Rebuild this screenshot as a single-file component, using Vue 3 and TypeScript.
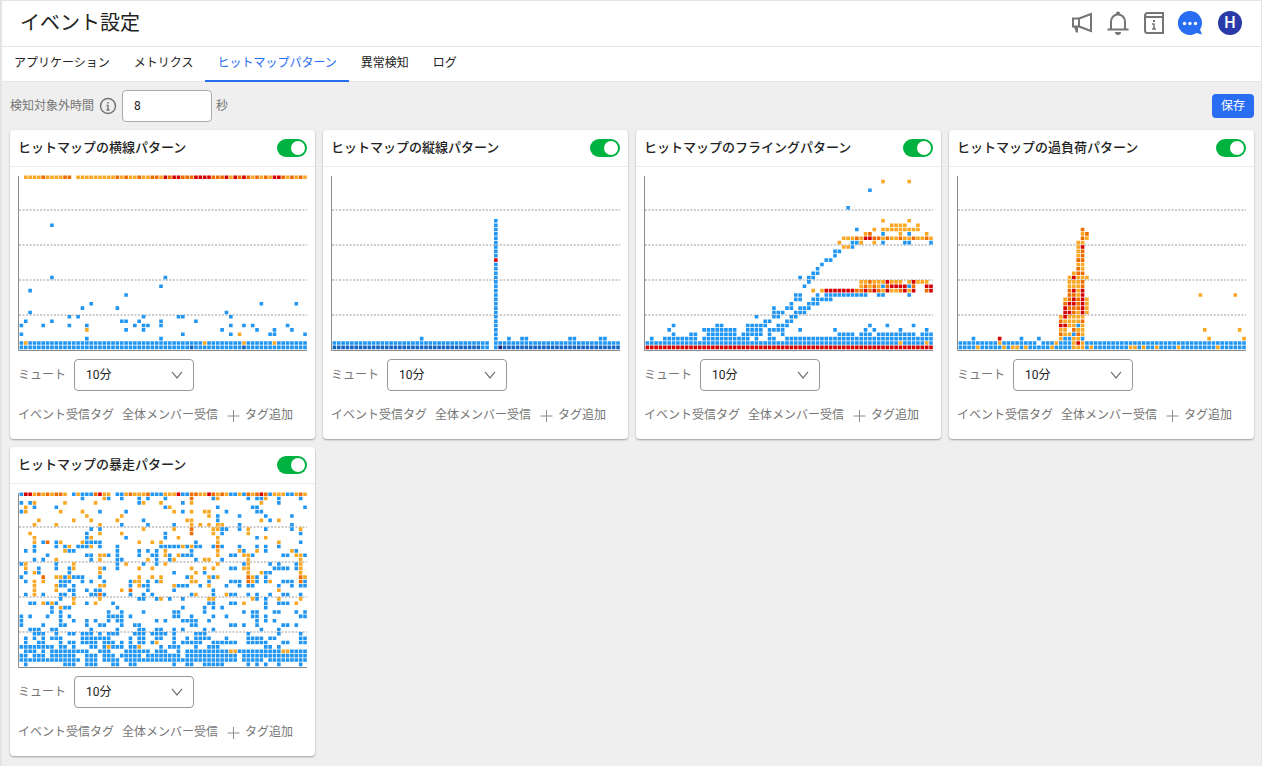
<script setup lang="ts">
import { ref, reactive } from 'vue'

type Tone = 'b' | 'o' | 'd' | 'r' | 'n' | 'i'
interface Layer { tone: Tone; path: string }
interface Pattern { id: string; title: string; enabled: boolean; mute: string; layers: Layer[] }

const COLS = 66
const ROWS = 40
const PITCH = 288 / COLS
const SIZE = 3.6
const ORIGIN = 1.2

// Each line: row counted from the bottom, then tone letters followed by columns or ranges.
function toLayers(source: string): Layer[] {
  const paths: Partial<Record<Tone, string>> = {}
  for (const line of source.trim().split('\n')) {
    const [row, ...tokens] = line.trim().split(/\s+/)
    let tone: Tone = 'b'
    for (const token of tokens) {
      if (/^[a-z]$/.test(token)) {
        tone = token as Tone
        continue
      }
      const [from, to = from] = token.split('-').map(Number)
      for (let col = from; col <= to; col++) {
        const x = ORIGIN + col * PITCH + (PITCH - SIZE) / 2
        const y = (ROWS - 1 - Number(row)) * PITCH + (PITCH - SIZE) / 2
        paths[tone] = (paths[tone] ?? '') + `M${x.toFixed(2)} ${y.toFixed(2)}h${SIZE}v${SIZE}h-${SIZE}z`
      }
    }
  }
  return (Object.keys(paths) as Tone[]).map((tone) => ({ tone, path: paths[tone] as string }))
}

const horizontal = `
39 o 1-4 6-9 13-21 23 25-26 28-29 32 48 53 55 57 61 63 65 d 5 10-11 22 24 27 30-31 34 37-39 44-46 50 52 54 56 60 62 64 r 33 35-36 40-43 47 49 51 58-59
28 b 7
16 b 7 33
14 b 32
13 b 2
12 b 24
10 b 16 55 63
9 b 14 22
8 b 2 47
7 b 11 13 28 36-37 48
6 b 1 7 23-24 27 32 40
5 b 0 5 11 15 26 28-29 32 48 51 53 61
4 o 15 b 24 28 46 54 58 62
3 b 0 37 48 57-58 65 o 50
2 b 15 32
1 b 0 2-41 43-50 52-57 59-65 o 1 42 51 58
0 b 0-38 40-50 52-65 n 39 51`

const vertical = `
${Array.from({ length: 27 }, (_, i) => `${i + 3} ${i + 3 === 20 ? 'r' : 'b'} 37`).join('\n')}
2 b 20 37 40 43-44 54-55 61-62
1 b 0-35 37-65
0 n 0-33 39-65 b 34-35 37 i 38`

const flying = `
38 o 54 60
36 b 51
32 b 46
29 o 54 60
28 o 56-59 62
27 b 48 o 52 54-62
26 o 50 58 64 d 51 b 54 60
25 o 45-47 49 54 56-57 59-60 62-63 65 d 48 52-53 55 58 61 64 r 50-51
24 o 44 49 52 b 47-48 54 59-60 65
23 o 45-46 b 47
22 b 43-44
21 b 43
20 b 41-42
19 b 40
18 b 39
17 b 38-39
16 b 35 37-38
15 b 37 o 49-50 52-54 56-58 60 62-64 d 51 r 55 61
14 b 36 54 60 o 49 51 53 d 50 52 55 61 r 56-59 64-65
13 o 38 40 54 56-57 60 d 48-49 51 53 58 64 r 41-47 50 52 55 59 61 65
12 b 34-35 39 41-50 53-54 60
11 b 34-35 38-42
10 b 33 37-39
9 b 29 32-33 35-37
8 b 29-31 34-36
7 b 25 29-30 33-34
6 b 27-28 32-33
5 b 6 16-17 23-27 30-32 51 55 61
4 b 5 13-20 23-26 28-31 35 43 50 52 58 64
3 b 6 10-11 14-20 22-26 28 31 44-47 49-51 53-61 63-65
2 b 1 4-11 13-23 25 28-29 32-65
1 b 0-57 59-63 65 o 58 64
0 r 0-65`

const overload = `
27 d 28
26 o 28 d 29
25 d 28 o 29
24 o 27-28
23 o 27 r 28
22 o 27 d 28
21 o 27 d 28
20 d 27-28
19 o 27-28
18 d 27 o 28
17 o 26 d 27-28
16 o 25 27-29 r 26
15 o 25-27 d 28
14 o 25-27 d 28
13 d 25 r 26 28 o 27
12 d 25-26 o 27 55 63 r 28
11 o 24 29 d 25 27 r 26 28
10 d 24 27 r 25-26 28 o 29
9 r 24 28 d 25-27 o 29
8 r 24-25 28 d 26 o 27 29
7 o 23 25-28 r 24
6 d 23 28 o 24-27
5 r 23-24 o 25-26 28 b 27
4 o 23-24 27-28 56 64 d 26
3 d 23 27 o 24-25 28 b 26
2 b 3 14 18 24-25 28 r 9 o 23 26-27 57 65
1 b 0-8 10-17 19-21 23-25 29-65 o 9 22 26 28 r 27
0 b 0-3 5-9 11 14 16-20 22-25 29 31-38 41 43-44 46-49 51-58 60-65 o 4 10 12-13 15 21 26-28 30 39-40 42 45 50 59`

const runaway = `
39 b 0 12 14-16 22-23 30-32 37-38 48-49 51 57 61-62 r 1-2 18 36 43 55 o 3 5 7 10 13 19-20 24 26-28 33-35 41-42 45 47 50 53 58-60 63 65 d 4 6 8-9 17 25 29 39-40 44 46 52 54 56 64
38 b 14 20 23 27 29 33 44 52 54-55 59 64 o 19 45 56 d 39
37 b 0 2 27 37 59 o 3 10 17 28 32 39 55
36 o 1 34 b 3 8 33 45 53-54 65
35 b 0 18 24 37 47 54-55 o 1 9 14 35 39 42-43
34 o 15 23 43 b 45 50 56 62
33 o 4 12 16 22 38-39 55 59 b 28 45 57
32 o 3 8 18 39 41 43 45-46 b 23 29 35 50 62
31 b 16 18 46-47 50 56 62 o 28 35 44-45 52 64 d 39
30 o 2 18 23 44 52 b 15 33 46 64 d 39
29 o 3 16 36 45 56 b 15 24 33 54
28 o 3 9 14 27 30 32 45 59 b 5 8 15-18 40 64 d 6
27 b 3 8 10 13-15 18 22 32-36 38 40-41 44 46 50 54 56 59 o 11 16 37 39 d 45
26 b 1 3 11-12 22 27 29 31 39 51 56 63 o 10 33 45 50 54 62
25 b 6 15-16 20 22 27 30-31 34 37-39 48-49 53 60-61 65 o 18-19 33 36 45 51-52 63-64
24 b 3 5 16 22-23 31 34 40 46 o 8 18 29 35 42-43 52 64
23 b 0 8 22 28 31 51 57 59 63 o 1 12 24 33 45 52 64
22 o 1 12 18 27 30 39 42 44 51-52 64 b 4 8 11 19 22 48-49 58-61 63
21 b 1 4 11 35 42 56-57 o 3 18 40 52 55 64
20 b 0 10 12-14 18 38 44 54 56 o 8-9 11 27 30 32 39 43 45 53 65 d 5 52 64
19 b 1 9-11 14 16 19 25 29 31 43 48-50 54 56 60-62 65 o 3 5 26-27 32 39-40 53 57 d 52 64
18 o 3 8 18-19 27 35 43 b 9-10 12 25 28-29 36-38 41 47 50 52-53 59 62 64-65
17 o 3 8 23 59 b 11-12 15 17-18 29 35 44 d 25
16 b 1 5 9-10 12 16-17 19 25 28 30 39 44 48-49 52 54 57 60-61 64 o 3 40 47 d 18
15 b 9 27-28 31 34 37 54 56 o 12 18 32 43-44 53 59 64
14 b 2-3 6 8 15 21 43-44 48-49 56 59-61 o 5 7 12 17 51 63
13 b 7 10-11 22 37 42 44 46 56 o 9
12 b 7 9 20 23 28 35-36 42 51 53-54 58-59 63 65
11 b 0 2 6 9 11 20-23 25 35-36 39 44 47 53-54 56 64-65
10 b 0 9 12 15 17 20 22-23 31 33 37-40 43 54 56 58
9 b 0 5 9-10 15 18-19 23 26-27 39-40 48-49 51 54 60-61 63
8 b 2-4 7-8 16 22 27-28 31-32 35 37 42 44 55 59
7 b 3-5 8 11-12 14-16 18 20-22 26-28 30-33 35 40-42 52 59 64
6 b 1 3 5 7-9 14-20 25 27-28 31-32 35 38 40-43 47 52-55 57-58 64-65
5 b 1 4-5 9 11-12 14-17 19-21 23 25 27-28 30 35 37-41 44-49 52-56 60-61 64-65 o 31
4 b 0-7 9-10 12 16-17 19 21-23 25-26 32 34-36 40 43-45 56-57 59 o 20 27
3 b 1-3 5 7-15 18-20 24-29 31-33 36 38-47 50-59 62-65 o 48-49 60-61
2 b 0-1 3-5 7-12 15-17 19-21 23-27 29-36 38-49 51-65
1 b 0-13 15-17 19-22 24-49 51-55 57-65
0 b 1 10-12 15-17 21-22 25-26 35 38-39 42-46 52 54 56 59 64`

const tabs = ['アプリケーション', 'メトリクス', 'ヒットマップパターン', '異常検知', 'ログ']
const activeTab = ref('ヒットマップパターン')
const excludedSeconds = ref('8')
const muteOptions = ['5分', '10分', '30分']
const gridLines = [35, 70, 105, 140]

const patterns = reactive<Pattern[]>([
  { id: 'horizontal', title: 'ヒットマップの横線パターン', enabled: true, mute: '10分', layers: toLayers(horizontal) },
  { id: 'vertical', title: 'ヒットマップの縦線パターン', enabled: true, mute: '10分', layers: toLayers(vertical) },
  { id: 'flying', title: 'ヒットマップのフライングパターン', enabled: true, mute: '10分', layers: toLayers(flying) },
  { id: 'overload', title: 'ヒットマップの過負荷パターン', enabled: true, mute: '10分', layers: toLayers(overload) },
  { id: 'runaway', title: 'ヒットマップの暴走パターン', enabled: true, mute: '10分', layers: toLayers(runaway) },
])
</script>

<template>
  <div class="page">
    <header class="header">
      <h1>イベント設定</h1>
      <div class="actions">
        <button type="button" class="icon-button" aria-label="お知らせ">
          <svg viewBox="0 0 24 24" fill="none" stroke="#757575" stroke-width="2">
            <path d="M3 7.500h6v8H3zM9 7.500 21 3v17L9 15.500" />
            <path d="M4 16h4v5.500H6z" fill="#757575" stroke="none" />
          </svg>
        </button>
        <button type="button" class="icon-button" aria-label="通知">
          <svg viewBox="0 0 24 24" fill="none" stroke="#757575" stroke-width="2">
            <path d="M1.500 18.500h21M5 18.500V10.500a7 7 0 0 1 14 0v8" />
            <path d="M10 4V2a2 1.500 0 0 1 4 0v2z" fill="#757575" stroke="none" />
            <path d="M9 21h6a3 3 0 0 1-6 0z" fill="#757575" stroke="none" />
          </svg>
        </button>
        <button type="button" class="icon-button" aria-label="ガイド">
          <svg viewBox="0 0 24 24" fill="none" stroke="#757575" stroke-width="2">
            <path d="M22 2H5.500A2.500 2.500 0 0 0 3 4.500V19.500A2.500 2.500 0 0 0 5.500 22H21V6H5.500A2 2 0 0 1 3 4M21 2v4" />
            <path d="M10 13h2v5M10 18h4" stroke-width="1.500" />
            <path d="M11 9h2v2h-2z" fill="#757575" stroke="none" />
          </svg>
        </button>
        <button type="button" class="icon-button" aria-label="チャット">
          <svg viewBox="0 0 24 24">
            <path d="M12 0a12 12 0 1 0 6.500 22l5.500 1.500-2-5A12 12 0 0 0 12 0z" fill="#296df2" />
            <circle cx="6.500" cy="12.500" r="1.700" fill="#fff" />
            <circle cx="12" cy="12.500" r="1.700" fill="#fff" />
            <circle cx="17.500" cy="12.500" r="1.700" fill="#fff" />
          </svg>
        </button>
        <button type="button" class="avatar">H</button>
      </div>
    </header>

    <nav class="tabs">
      <a
        v-for="tab in tabs"
        :key="tab"
        href="#"
        :class="{ active: tab === activeTab }"
        @click.prevent="activeTab = tab"
      >{{ tab }}</a>
    </nav>

    <main class="content">
      <div class="toolbar">
        <label for="excluded">検知対象外時間</label>
        <svg class="info" viewBox="0 0 18 18" fill="none" stroke="#757575">
          <circle cx="9" cy="9" r="7.500" stroke-width="1.500" />
          <path d="M7.500 8.500H9V13M7.500 13h3" stroke-width="1.400" />
          <path d="M8.200 5h1.600v1.600H8.200z" fill="#757575" stroke="none" />
        </svg>
        <input id="excluded" v-model="excludedSeconds" type="text" />
        <span class="unit">秒</span>
        <button type="button" class="save">保存</button>
      </div>

      <div class="cards">
        <section v-for="pattern in patterns" :key="pattern.id" class="card">
          <div class="card-head">
            <h2><label :for="`toggle-${pattern.id}`">{{ pattern.title }}</label></h2>
            <input :id="`toggle-${pattern.id}`" v-model="pattern.enabled" type="checkbox" class="toggle" />
          </div>
          <div class="card-body">
            <svg class="chart" viewBox="0 0 289 176">
              <line
                v-for="y in gridLines"
                :key="y"
                x1="1"
                x2="289"
                :y1="y"
                :y2="y"
                class="grid-line"
              />
              <path v-for="layer in pattern.layers" :key="layer.tone" :d="layer.path" :class="`tone-${layer.tone}`" />
              <path class="axis" d="M.5 1V175.500H289" />
            </svg>
            <div class="mute">
              <label :for="`mute-${pattern.id}`">ミュート</label>
              <span class="select">
                <select :id="`mute-${pattern.id}`" v-model="pattern.mute">
                  <option v-for="option in muteOptions" :key="option">{{ option }}</option>
                </select>
                <svg viewBox="0 0 12 8" fill="none" stroke="#757575" stroke-width="1.200">
                  <path d="M1 .8 6 7l5-6.200" />
                </svg>
              </span>
            </div>
            <div class="tags">
              <span>イベント受信タグ</span>
              <span>全体メンバー受信</span>
              <button type="button" class="add">
                <svg viewBox="0 0 14 14" stroke="#8c8c8c"><path d="M7.500 2v12M1.500 8h12" /></svg>
                タグ追加
              </button>
            </div>
          </div>
        </section>
      </div>
    </main>
  </div>
</template>

<style>
body {
  margin: 0;
  background: #efefef;
}
</style>

<style scoped>
.page {
  box-sizing: border-box;
  min-height: 100vh;
  border: 1px solid #e4e4e4;
  border-left-width: 2px;
  background: #efefef;
  color: #222;
  font-family: Roboto, "Noto Sans CJK JP", sans-serif;
  font-size: 12px;
  line-height: 18px;
}
button,
input,
select {
  font: inherit;
  color: inherit;
}
.header {
  display: flex;
  align-items: center;
  justify-content: space-between;
  box-sizing: border-box;
  height: 46px;
  padding: 0 19px 2px 18px;
  border-bottom: 1px solid #e4e4e4;
  background: #fff;
}
h1 {
  margin: 0;
  font-size: 20px;
  line-height: 28px;
  font-weight: 400;
}
.actions {
  display: flex;
  gap: 12px;
}
.icon-button,
.avatar {
  width: 24px;
  height: 24px;
  padding: 0;
  border: 0;
  background: none;
}
.icon-button svg {
  display: block;
}
.avatar {
  margin-left: 4px;
  border-radius: 50%;
  background: #2a3aa8;
  color: #fff;
  font-size: 16px;
  font-weight: 500;
  line-height: 24px;
}
.tabs {
  display: flex;
  height: 34px;
  border-bottom: 1px solid #e4e4e4;
  background: #fff;
}
.tabs a {
  height: 33px;
  padding: 0 12px;
  border-bottom: 2px solid transparent;
  color: #222;
  line-height: 33px;
  text-decoration: none;
}
.tabs a.active {
  border-bottom-color: #296df2;
  color: #296df2;
}
.content {
  padding: 8px 7px 10px 8px;
}
.toolbar {
  display: flex;
  align-items: center;
  margin-bottom: 8px;
  color: #757575;
}
.info {
  width: 18px;
  height: 18px;
  margin: 0 5px;
}
.toolbar input {
  box-sizing: border-box;
  width: 90px;
  height: 32px;
  padding: 0 11px;
  border: 1px solid #aaa;
  border-radius: 4px;
  background: #fff;
  color: #222;
}
.unit {
  margin-left: 4px;
}
.save {
  width: 42px;
  height: 24px;
  margin-left: auto;
  padding: 0;
  border: 0;
  border-radius: 4px;
  background: #296df2;
  color: #fff;
}
.cards {
  display: grid;
  grid-template-columns: repeat(auto-fill, minmax(290px, 1fr));
  gap: 8px;
}
.card {
  border-radius: 4px;
  background: #fff;
  box-shadow: 0 1px 2px rgba(0, 0, 0, 0.35);
}
.card-head {
  display: flex;
  align-items: center;
  justify-content: space-between;
  height: 36px;
  padding: 0 8px;
  border-bottom: 1px solid #ebebeb;
}
h2 {
  margin: 0;
  font-size: 13px;
  line-height: 20px;
  font-weight: 500;
}
.toggle {
  appearance: none;
  width: 30px;
  height: 18px;
  margin: 0;
  padding: 2px;
  border-radius: 9px;
  background: #bbb;
}
.toggle::before {
  content: "";
  display: block;
  width: 14px;
  height: 14px;
  border-radius: 50%;
  background: #fff;
}
.toggle:checked {
  background: #00b341;
}
.toggle:checked::before {
  margin-left: auto;
}
.card-body {
  padding: 8px 8px 15px;
}
.chart {
  display: block;
  width: 100%;
}
.grid-line {
  stroke: #999;
  stroke-width: 1;
  stroke-dasharray: 2 1.5;
}
.axis {
  fill: none;
  stroke: #8c8c8c;
}
.tone-b { fill: #2196f3; }
.tone-o { fill: #f9a825; }
.tone-d { fill: #ef6c00; }
.tone-r { fill: #d50000; }
.tone-n { fill: #1565c0; }
.tone-i { fill: #1a237e; }
.mute {
  display: flex;
  align-items: center;
  gap: 8px;
  margin-top: 8px;
  color: #757575;
}
.select {
  display: grid;
  align-items: center;
  width: 120px;
}
.select select,
.select svg {
  grid-area: 1 / 1;
}
.select select {
  appearance: none;
  box-sizing: border-box;
  width: 100%;
  height: 32px;
  padding: 0 11px;
  border: 1px solid #999;
  border-radius: 4px;
  background: #fff;
  color: #222;
}
.select svg {
  justify-self: end;
  width: 12px;
  height: 8px;
  margin-right: 11px;
  pointer-events: none;
}
.tags {
  display: flex;
  align-items: center;
  gap: 8px;
  margin-top: 15px;
  color: #757575;
}
.add {
  display: flex;
  align-items: center;
  gap: 5px;
  padding: 0;
  border: 0;
  background: none;
}
.add svg {
  width: 14px;
  height: 14px;
}
</style>
